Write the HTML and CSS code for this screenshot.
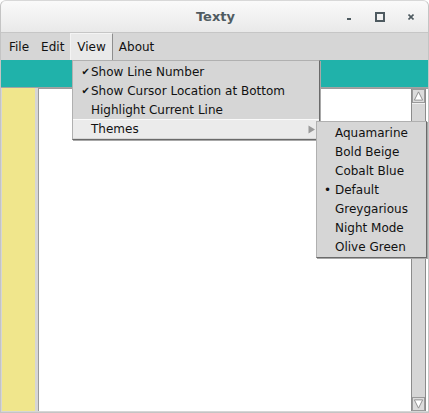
FILE: index.html
```html
<!DOCTYPE html>
<html>
<head>
<meta charset="utf-8">
<link rel="stylesheet" href="styles.css">
</head>
<body>
<div class="window">
  <div class="titlebar">
    <span class="title">Texty</span>
    <div class="controls">
      <span class="ctl ctl-min"></span>
      <span class="ctl ctl-max"></span>
      <span class="ctl ctl-close">
        <svg width="6" height="6" viewBox="0 0 6 6"><path d="M0.5 0.5L5.5 5.5M5.5 0.5L0.5 5.5" stroke="#4e5a60" stroke-width="1.6"/></svg>
      </span>
    </div>
  </div>
  <div class="menubar">
    <span class="mitem">File</span>
    <span class="mitem">Edit</span>
    <span class="mitem active">View</span>
    <span class="mitem">About</span>
  </div>
  <div class="toolbar"></div>
  <div class="content">
    <div class="gutter"></div>
    <div class="editor">
      <div class="text"></div>
      <div class="scrollbar">
        <div class="arrow up">
          <svg width="12" height="12" viewBox="0 0 12 12"><path d="M6 1.5L10.5 10.5H1.5Z" fill="#fff" stroke="#8a8a8a"/></svg>
        </div>
        <div class="track"></div>
        <div class="arrow down">
          <svg width="12" height="12" viewBox="0 0 12 12"><path d="M6 10.5L10.5 1.5H1.5Z" fill="#fff" stroke="#8a8a8a"/></svg>
        </div>
      </div>
    </div>
  </div>

  <div class="menu view-menu">
    <div class="row"><span class="mark">✔</span>Show Line Number</div>
    <div class="row"><span class="mark">✔</span>Show Cursor Location at Bottom</div>
    <div class="row"><span class="mark"></span>Highlight Current Line</div>
    <div class="row hl"><span class="mark"></span>Themes
      <svg class="sub" width="8" height="9" viewBox="0 0 8 9"><path d="M0.5 0.5L7 4.5L0.5 8.5Z" fill="#9a9a9a"/></svg>
    </div>
  </div>

  <div class="menu theme-menu">
    <div class="row"><span class="mark"></span>Aquamarine</div>
    <div class="row"><span class="mark"></span>Bold Beige</div>
    <div class="row"><span class="mark"></span>Cobalt Blue</div>
    <div class="row"><span class="mark dot">•</span>Default</div>
    <div class="row"><span class="mark"></span>Greygarious</div>
    <div class="row"><span class="mark"></span>Night Mode</div>
    <div class="row"><span class="mark"></span>Olive Green</div>
  </div>
</div>
</body>
</html>
```
FILE: styles.css
```css
* { box-sizing: border-box; }
html, body { margin: 0; padding: 0; background: #ffffff; }
body { font-family: "DejaVu Sans", sans-serif; }

.window {
  position: relative;
  width: 429px;
  height: 413px;
  border: 1px solid #c4c4c4;
  border-top-color: #d8d8d8;
  border-radius: 6px 6px 0 0;
  background: #d6d6d6;
  display: flex;
  flex-direction: column;
  overflow: hidden;
}

.titlebar {
  height: 32px;
  flex: none;
  position: relative;
  display: flex;
  align-items: center;
  justify-content: center;
  background: linear-gradient(#fafafa, #e9e9e9);
  border-bottom: 1px solid #c6c6c6;
}
.title {
  font-weight: bold;
  font-size: 13px;
  color: #505b61;
  margin-left: 2px;
}
.controls {
  position: absolute;
  right: 2px;
  top: 0;
  height: 32px;
  display: flex;
  align-items: center;
}
.ctl {
  width: 31px;
  height: 12px;
  display: flex;
  align-items: center;
  justify-content: center;
}
.ctl-min::before {
  content: "";
  width: 4px;
  height: 2px;
  margin-top: 4px;
  background: #4e5a60;
}
.ctl-max::before {
  content: "";
  width: 6px;
  height: 6px;
  border: 2px solid #4e5a60;
}

.menubar {
  height: 27px;
  flex: none;
  display: flex;
  align-items: stretch;
  background: #d6d6d6;
  padding-left: 2px;
  font-size: 12px;
  color: #111;
}
.mitem {
  display: flex;
  align-items: center;
  padding: 0 5px;
  border: 1px solid transparent;
  border-bottom: none;
}
.mitem.active {
  padding: 0 6px;
  background: #e9e9e9;
  border-color: #f4f4f4 #8e8e8e transparent #f4f4f4;
}

.toolbar {
  height: 28px;
  flex: none;
  background: #20b2aa;
  border-bottom: 1px solid #a3a3a3;
}

.content {
  flex: 1;
  display: flex;
  padding-bottom: 1px;
}
.gutter {
  width: 33px;
  margin-left: 1px;
  background: #f0e68c;
}
.editor {
  flex: 1;
  display: flex;
  margin-left: 3px;
  border-left: 1px solid #9b9b9b;
  border-top: 1px solid #9b9b9b;
  background: #fff;
}
.text { flex: 1; }
.scrollbar {
  width: 15px;
  margin-right: 2px;
  display: flex;
  flex-direction: column;
  background: #d6d6d6;
  border-left: 1px solid #8c8c8c;
  border-right: 1px solid #8c8c8c;
}
.arrow {
  height: 14px;
  display: flex;
  align-items: center;
  justify-content: center;
  background: #dcdcdc;
  border: 1px solid #9a9a9a;
}
.track { flex: 1; border-top: 1px solid #f0f0f0; }

.menu {
  position: absolute;
  background: #d6d6d6;
  border: 1px solid #b0b0b0;
  border-right-color: #6a6a6a;
  border-bottom-color: #6a6a6a;
  box-shadow: 1px 1px 0 #a8a8a8;
  font-size: 12px;
  color: #111;
  padding: 1px 0;
}
.view-menu {
  left: 71px;
  top: 59px;
  width: 248px;
}
.theme-menu {
  left: 315px;
  top: 120px;
  width: 111px;
}
.row {
  height: 19px;
  display: flex;
  align-items: center;
  position: relative;
}
.mark {
  width: 18px;
  font-size: 10px;
  text-align: right;
  padding-right: 1px;
  flex: none;
}
.mark.dot { font-size: 12px; padding-right: 4px; }
.row.hl {
  background: #ebebeb;
  border-top: 1px solid #fafafa;
}
.sub {
  position: absolute;
  right: 3px;
  top: 5px;
}
```
